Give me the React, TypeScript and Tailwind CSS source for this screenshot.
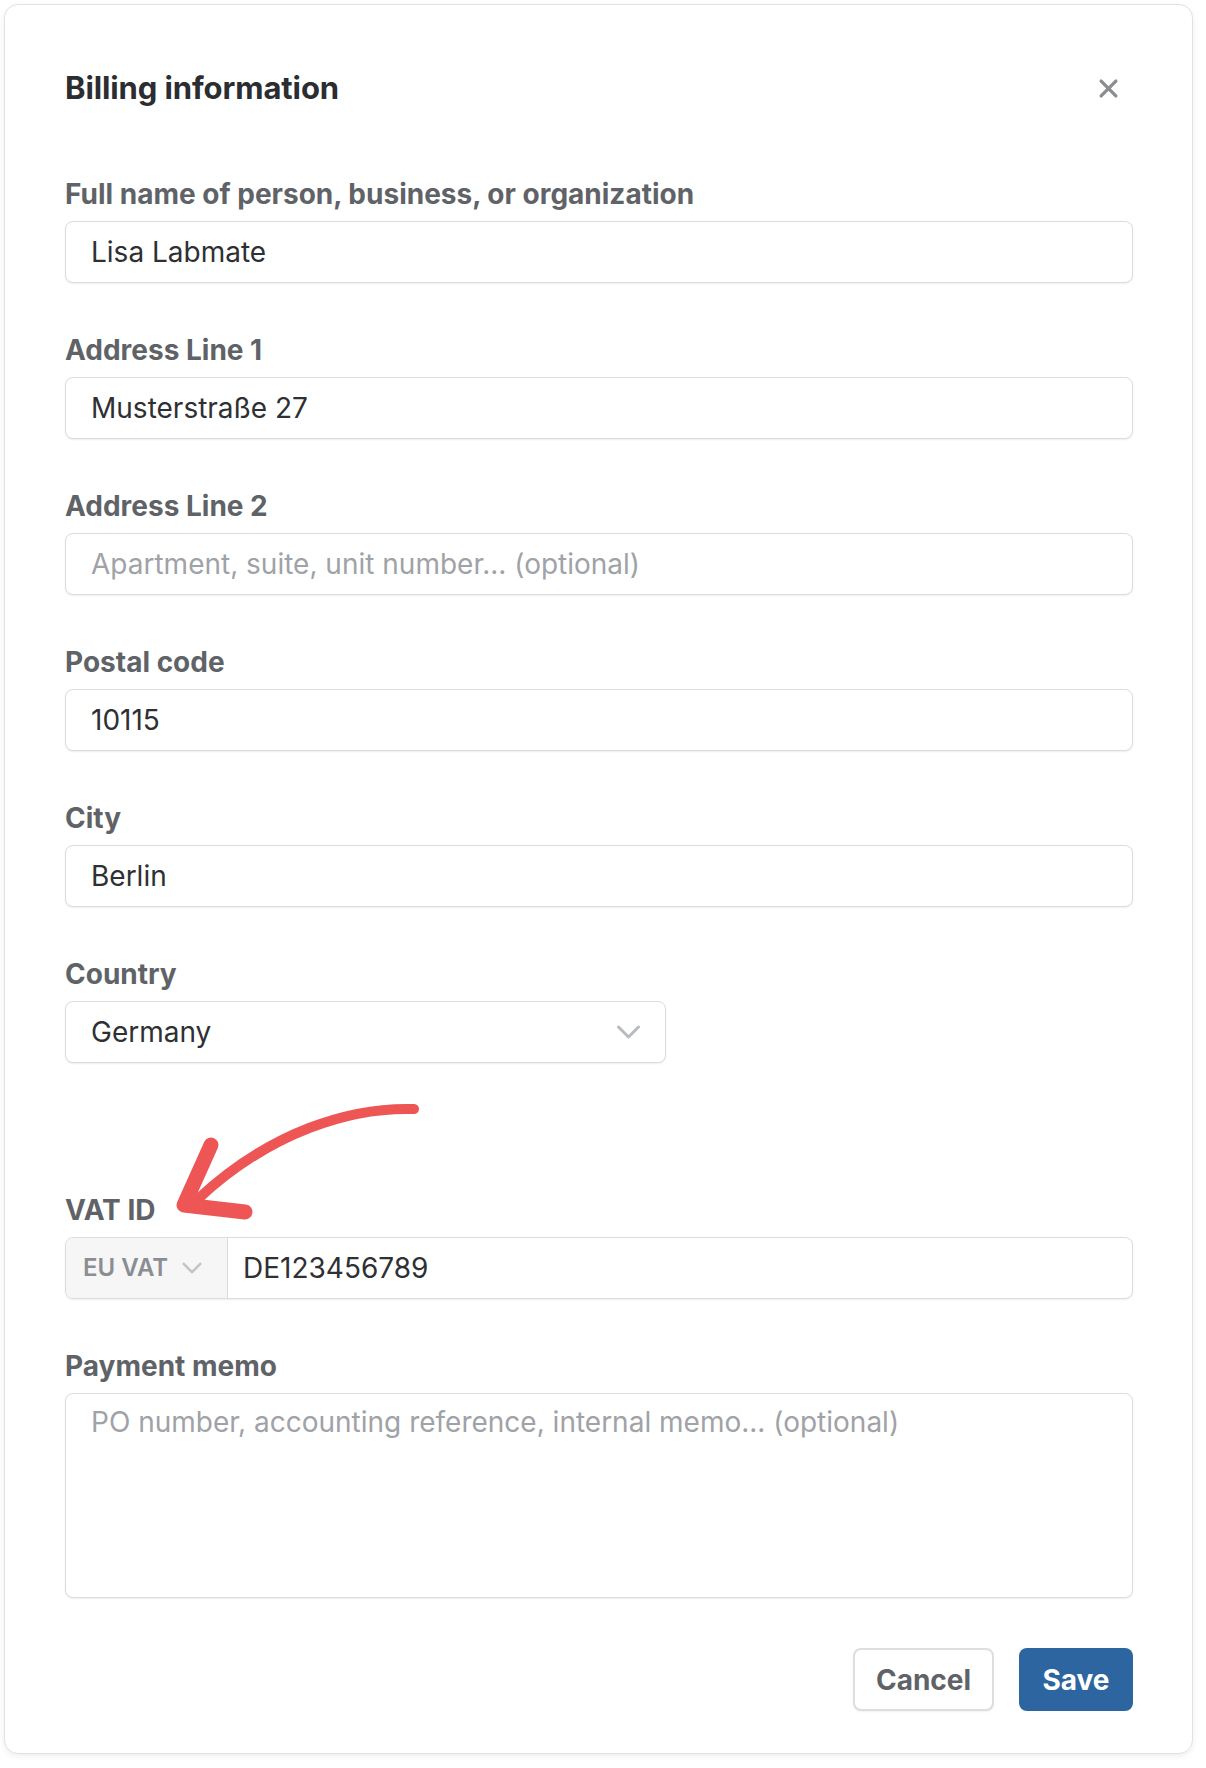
import React from "react";

const Field = ({
  label,
  value,
  placeholder,
}: {
  label: string;
  value?: string;
  placeholder?: string;
}) => {
  return (
    <div className="flex flex-col gap-[11px]">
      <label className="text-[28px] leading-8 font-bold text-[#5f6368]">{label}</label>
      <input
        readOnly
        defaultValue={value}
        placeholder={placeholder}
        className="h-[62px] w-full rounded-lg border border-[#dcdcdc] bg-white px-[25px] text-[28px] text-[#2e3033] placeholder:text-[#9fa2a7] shadow-[0_1px_2px_rgba(0,0,0,0.07)] outline-none"
      />
    </div>
  );
};

const Chevron = ({ className }: { className: string }) => (
  <svg viewBox="0 0 24 14" fill="none" className={className}>
    <path d="M2 2l10 10L22 2" stroke="currentColor" strokeWidth="3" strokeLinecap="round" strokeLinejoin="round" />
  </svg>
);

export default function App() {
  return (
    <div className="min-h-[1768px] bg-white pt-[4px] pl-[4px] font-['Inter','Noto_Sans',sans-serif]">
      <div className="relative w-[1189px] rounded-[14px] border border-[#e2e2e2] bg-white pl-[60px] pr-[59px] pt-[65px] pb-[42px] shadow-[0_2px_6px_rgba(0,0,0,0.07)]">
        {/* header */}
        <div className="flex items-center justify-between">
          <h2 className="text-[31px] leading-9 font-bold tracking-[-0.1px] text-[#2b2d30]">Billing information</h2>
          <svg viewBox="0 0 20 20" className="mr-[14px] h-[21px] w-[21px] text-[#8a8d91]">
            <path d="M3 3l14 14M17 3L3 17" stroke="currentColor" strokeWidth="3.2" strokeLinecap="round" />
          </svg>
        </div>

        <div className="mt-[72px] flex flex-col gap-[51px]">
          <Field label="Full name of person, business, or organization" value="Lisa Labmate" />
          <Field label="Address Line 1" value="Musterstraße 27" />
          <Field label="Address Line 2" placeholder="Apartment, suite, unit number... (optional)" />
          <Field label="Postal code" value="10115" />
          <Field label="City" value="Berlin" />

          <div className="flex flex-col gap-[11px]">
            <label className="text-[28px] leading-8 font-bold text-[#5f6368]">Country</label>
            <div className="flex h-[62px] w-[601px] items-center justify-between rounded-lg border border-[#dcdcdc] bg-white pl-[25px] pr-[24px] text-[28px] text-[#2e3033] shadow-[0_1px_2px_rgba(0,0,0,0.07)]">
              <span>Germany</span>
              <Chevron className="h-[14px] w-[25px] text-[#b8bbbf]" />
            </div>
          </div>
        </div>

        {/* VAT */}
        <div className="mt-[131px] flex flex-col gap-[11px]">
          <label className="text-[28px] leading-8 font-bold text-[#5f6368]">VAT ID</label>
          <div className="flex h-[62px] w-full overflow-hidden rounded-lg border border-[#dcdcdc] bg-white shadow-[0_1px_2px_rgba(0,0,0,0.07)]">
            <div className="flex w-[162px] items-center gap-[14px] border-r border-[#dcdcdc] bg-[#f6f6f7] pl-[17px] text-[24px] font-semibold text-[#8a8d92]">
              <span>EU VAT</span>
              <Chevron className="h-[12px] w-[20px] text-[#c0c3c7]" />
            </div>
            <div className="flex items-center pl-[15px] text-[28px] text-[#2e3033]">DE123456789</div>
          </div>
        </div>

        {/* memo */}
        <div className="mt-[51px] flex flex-col gap-[11px]">
          <label className="text-[28px] leading-8 font-bold text-[#5f6368]">Payment memo</label>
          <textarea
            readOnly
            placeholder="PO number, accounting reference, internal memo... (optional)"
            className="h-[205px] w-full resize-none rounded-lg border border-[#dcdcdc] bg-white px-[25px] py-[10px] text-[28px] leading-9 text-[#2e3033] placeholder:text-[#9fa2a7] shadow-[0_1px_2px_rgba(0,0,0,0.07)] outline-none"
          />
        </div>

        {/* actions */}
        <div className="mt-[50px] flex justify-end gap-[25px]">
          <button className="h-[63px] w-[141px] rounded-lg border-2 border-[#dedede] bg-white text-[28px] font-bold text-[#5f6368] shadow-[0_1px_2px_rgba(0,0,0,0.06)]">
            Cancel
          </button>
          <button className="h-[63px] w-[114px] rounded-lg bg-[#2d65a0] text-[28px] font-bold text-white">Save</button>
        </div>

        {/* annotation arrow */}
        <svg
          viewBox="0 0 250 120"
          fill="none"
          className="absolute left-[166px] top-[1096px] h-[120px] w-[250px] text-[#ee5656]"
        >
          <path d="M243 8 C 180 6, 100 30, 27 98" stroke="currentColor" strokeWidth="10" strokeLinecap="round" />
          <path d="M40 44 L 13 104 L 74 111" stroke="currentColor" strokeWidth="15" strokeLinecap="round" strokeLinejoin="round" />
        </svg>
      </div>
    </div>
  );
}
